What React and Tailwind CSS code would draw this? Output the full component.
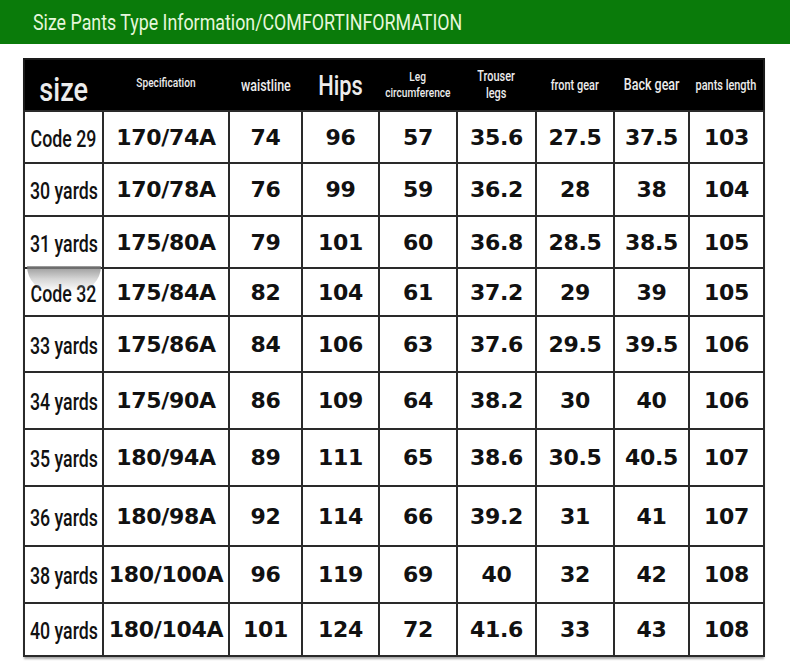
import React from "react";

const COLS = ["w-[79px]", "w-[126px]", "w-[73px]", "w-[77px]", "w-[78px]", "w-[79px]", "w-[78px]", "w-[75px]", "w-[75px]"];

const ROWS = [
  { h: "h-[52px]", size: "Code 29", vals: ["170/74A", "74", "96", "57", "35.6", "27.5", "37.5", "103"] },
  { h: "h-[53px]", size: "30 yards", vals: ["170/78A", "76", "99", "59", "36.2", "28", "38", "104"] },
  { h: "h-[52px]", size: "31 yards", vals: ["175/80A", "79", "101", "60", "36.8", "28.5", "38.5", "105"] },
  { h: "h-[48px]", size: "Code 32", vals: ["175/84A", "82", "104", "61", "37.2", "29", "39", "105"] },
  { h: "h-[56px]", size: "33 yards", vals: ["175/86A", "84", "106", "63", "37.6", "29.5", "39.5", "106"] },
  { h: "h-[57px]", size: "34 yards", vals: ["175/90A", "86", "109", "64", "38.2", "30", "40", "106"] },
  { h: "h-[57px]", size: "35 yards", vals: ["180/94A", "89", "111", "65", "38.6", "30.5", "40.5", "107"] },
  { h: "h-[60px]", size: "36 yards", vals: ["180/98A", "92", "114", "66", "39.2", "31", "41", "107"] },
  { h: "h-[57px]", size: "38 yards", vals: ["180/100A", "96", "119", "69", "40", "32", "42", "108"] },
  { h: "h-[53px]", size: "40 yards", vals: ["180/104A", "101", "124", "72", "41.6", "33", "43", "108"] },
];

// condensed look: Roboto squeezed horizontally
function Cond({ className = "", squeeze = "scale-x-[0.78]", children }) {
  return (
    <div className={`flex justify-center font-['Roboto',sans-serif] font-medium ${className}`}>
      <span className={`inline-block whitespace-nowrap ${squeeze}`}>{children}</span>
    </div>
  );
}

export default function App() {
  return (
    <div className="w-[790px] h-[666px] bg-white overflow-hidden">
      <div className="h-[44px] bg-[#0a7b0a] flex items-center pl-[33px]">
        <h1 className="font-['Roboto',sans-serif] text-[22px] text-[#e6f7dc] whitespace-nowrap origin-left scale-x-[0.81]">
          Size Pants Type Information/COMFORTINFORMATION
        </h1>
      </div>

      <div className="pl-[23px] pt-[14px]">
        <div className="relative w-[740px] shadow-[1px_2px_2px_rgba(0,0,0,0.35)]">
          <table className="table-fixed w-[740px] border-collapse border-2 border-[#1a1a1a]">
            <colgroup>
              {COLS.map((c, i) => (
                <col key={i} className={c} />
              ))}
            </colgroup>
            <thead>
              <tr className="h-[52px] bg-black text-[#ececec]">
                <th className="font-normal p-0">
                  <Cond className="text-[33px] leading-[34px] pt-[10px]" squeeze="scale-x-[0.82]">
                    size
                  </Cond>
                </th>
                <th className="font-normal p-0">
                  <Cond className="text-[13px] pb-[4px]">Specification</Cond>
                </th>
                <th className="font-normal p-0">
                  <Cond className="text-[16px] pt-[2px]">waistline</Cond>
                </th>
                <th className="font-normal p-0">
                  <Cond className="text-[28px] leading-[30px] pt-[2px]">Hips</Cond>
                </th>
                <th className="font-normal p-0">
                  <Cond className="text-[13px] leading-[16px]">Leg</Cond>
                  <Cond className="text-[13px] leading-[16px]">circumference</Cond>
                </th>
                <th className="font-normal p-0">
                  <Cond className="text-[14px] leading-[17px]">Trouser</Cond>
                  <Cond className="text-[14px] leading-[17px]">legs</Cond>
                </th>
                <th className="font-normal p-0">
                  <Cond className="text-[14px]">front gear</Cond>
                </th>
                <th className="font-normal p-0">
                  <Cond className="text-[16px]">Back gear</Cond>
                </th>
                <th className="font-normal p-0">
                  <Cond className="text-[14px]">pants length</Cond>
                </th>
              </tr>
            </thead>
            <tbody>
              {ROWS.map((r) => (
                <tr key={r.size} className={r.h}>
                  <td className="border-2 border-[#2a2a2a] text-[#111] p-0">
                    <Cond className="text-[24px] pt-[3px]" squeeze="scale-x-[0.74]">
                      {r.size}
                    </Cond>
                  </td>
                  {r.vals.map((v, i) => (
                    <td
                      key={i}
                      className="border-2 border-[#2a2a2a] text-center font-['DejaVu_Sans',sans-serif] font-bold text-[22px] text-[#111] whitespace-nowrap tracking-[-0.3px]"
                    >
                      {v}
                    </td>
                  ))}
                </tr>
              ))}
            </tbody>
          </table>
          <div className="absolute left-[4px] top-[208px] w-[74px] h-[26px] rounded-b-full bg-gradient-to-b from-[#7d7d7d] via-[#b5b5b5]/70 to-transparent opacity-80 pointer-events-none" />
        </div>
      </div>
    </div>
  );
}
